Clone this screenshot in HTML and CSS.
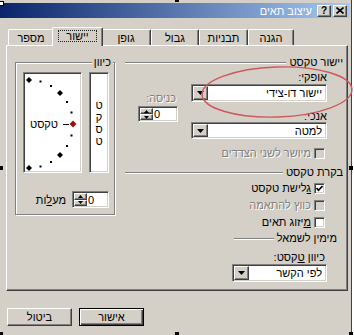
FILE: index.html
```html
<!DOCTYPE html>
<html lang="he">
<head>
    <meta charset="UTF-8">
    <title>עיצוב תאים</title>
    <link rel="stylesheet" href="styles.css">
</head>
<body>
<div class="screen">
    <div class="window">
        <!-- Title bar -->
        <div class="titlebar">
            <span class="title" dir="rtl">עיצוב תאים</span>
            <span class="cap-btn raised">?</span>
            <span class="cap-btn raised">
                <svg width="8" height="7" viewBox="0 0 8 7"><path d="M0.5 0.5 L7.5 6.5 M7.5 0.5 L0.5 6.5" stroke="#000" stroke-width="1.6"/></svg>
            </span>
        </div>

        <!-- Tabs -->
        <div class="tabs">
            <div class="tab">מספר</div>
            <div class="tab active"><span class="focus">יישור</span></div>
            <div class="tab">גופן</div>
            <div class="tab">גבול</div>
            <div class="tab">תבניות</div>
            <div class="tab">הגנה</div>
        </div>

        <div class="panel">
            <!-- Orientation group -->
            <div class="orient">
                <div class="group-title"><span>כיוון</span></div>
                <div class="orient-body">
                    <div class="diagram sunken">
                        <svg width="55" height="97" viewBox="0 0 55 97">
                            <polygon points="4,2 7,5 4,8 1,5" fill="#000"/>
                            <rect x="14.5" y="5.5" width="2" height="2" fill="#000"/>
                            <rect x="25" y="10" width="2" height="2" fill="#000"/>
                            <polygon points="35,15 38,18 35,21 32,18" fill="#000"/>
                            <rect x="41" y="26" width="2" height="2" fill="#000"/>
                            <rect x="45.5" y="36.5" width="2" height="2" fill="#000"/>
                            <polygon points="48,45.5 51.5,49 48,52.5 44.5,49" fill="#a01010"/>
                            <rect x="45.5" y="59.5" width="2" height="2" fill="#000"/>
                            <rect x="41" y="70" width="2" height="2" fill="#000"/>
                            <polygon points="35,77 38,80 35,83 32,80" fill="#000"/>
                            <rect x="25" y="86" width="2" height="2" fill="#000"/>
                            <rect x="14.5" y="90.5" width="2" height="2" fill="#000"/>
                            <polygon points="4,90 7,93 4,96 1,93" fill="#000"/>
                            <line x1="38" y1="49.5" x2="44" y2="49.5" stroke="#000" stroke-width="1"/>
                            <text x="19" y="53" text-anchor="middle" class="diag-text">טקסט</text>
                        </svg>
                    </div>
                    <div class="vtext sunken">
                        <span>ט</span><span>ק</span><span>ס</span><span>ט</span>
                    </div>
                </div>
                <div class="degrees">
                    <span dir="rtl">מע<u>ל</u>ות</span>
                    <div class="spin sunken">
                        <div class="spin-btns">
                            <span class="spin-btn raised"><svg width="5" height="3"><polygon points="2.5,0 5,3 0,3" fill="#000"/></svg></span>
                            <span class="spin-btn raised"><svg width="5" height="3"><polygon points="0,0 5,0 2.5,3" fill="#000"/></svg></span>
                        </div>
                        <span class="spin-val">0</span>
                    </div>
                </div>
            </div>

            <!-- Text alignment / control / direction -->
            <div class="align-area" dir="rtl">
                <div class="heading">יישור טקסט</div>
                <div class="h-grid">
                    <div class="field-label">אופקי:</div>
                    <div></div>
                    <div class="combo sunken">
                        <span class="combo-text">יישור דו-צידי</span>
                        <span class="drop raised"><svg width="7" height="4"><polygon points="0,0 7,0 3.5,4" fill="#000"/></svg></span>
                    </div>
                    <div class="indent-label">כניסה:</div>
                    <div class="field-label low">אנכי:</div>
                    <div class="spin sunken indent-spin" dir="ltr">
                        <div class="spin-btns">
                            <span class="spin-btn raised"><svg width="5" height="3"><polygon points="2.5,0 5,3 0,3" fill="#000"/></svg></span>
                            <span class="spin-btn raised"><svg width="5" height="3"><polygon points="0,0 5,0 2.5,3" fill="#000"/></svg></span>
                        </div>
                        <span class="spin-val">0</span>
                    </div>
                    <div class="combo sunken short">
                        <span class="combo-text">למטה</span>
                        <span class="drop raised"><svg width="7" height="4"><polygon points="0,0 7,0 3.5,4" fill="#000"/></svg></span>
                    </div>
                </div>

                <div class="check disabled first"><span class="box"></span><span class="check-text">מיושר לשני הצדדים</span></div>

                <div class="heading second">בקרת טקסט</div>
                <div class="check wrap"><span class="box"><svg width="7" height="7" viewBox="0 0 7 7"><polyline points="0.5,3 2.5,5.3 6.5,1" fill="none" stroke="#000" stroke-width="1.7"/></svg></span><span class="check-text"><u>ג</u>לישת טקסט</span></div>
                <div class="check disabled"><span class="box"></span><span class="check-text">כווץ להתאמה</span></div>
                <div class="check"><span class="box"></span><span class="check-text"><u>מ</u>יזוג תאים</span></div>

                <div class="heading third">מימין לשמאל</div>
                <div class="field-label dir-label">כיוון <u>ט</u>קסט:</div>
                <div class="combo sunken narrow">
                    <span class="combo-text">לפי הקשר</span>
                    <span class="drop raised"><svg width="7" height="4"><polygon points="0,0 7,0 3.5,4" fill="#000"/></svg></span>
                </div>
            </div>
        </div>

        <div class="buttons">
            <div class="btn raised">ביטול</div>
            <div class="btn default">אישור</div>
        </div>
    </div>

    <!-- red hand-drawn highlight -->
    <svg class="highlight" width="354" height="335">
        <ellipse cx="277" cy="92" rx="75" ry="25" fill="none" stroke="#d0575a" stroke-width="1.4" transform="rotate(-2 277 92)"/>
    </svg>

    <!-- selection handles -->
    <span class="handle h-tl"></span>
    <span class="handle h-tm"></span>
    <span class="handle h-ml"></span>
    <span class="handle h-mr"></span>
    <span class="handle h-bl"></span>
    <span class="handle h-bm"></span>
    <span class="handle h-br"></span>
</div>
</body>
</html>
```

FILE: styles.css
```css
body {
    margin: 0;
    font-family: "Liberation Sans", "DejaVu Sans", sans-serif;
    font-size: 11px;
    color: #000;
    background-color: #fff;
}

.screen {
    position: relative;
    width: 354px;
    height: 335px;
    overflow: hidden;
}

.window {
    width: 352px;
    height: 335px;
    box-sizing: border-box;
    padding-top: 3px;
    background-color: #d4d0c8;
    border-right: 1px solid #404040;
}

/* classic 3D edges */
.raised {
    box-sizing: border-box;
    background-color: #d4d0c8;
    border: 1px solid;
    border-color: #fff #404040 #404040 #fff;
    box-shadow: inset -1px -1px #808080;
}

.sunken {
    box-sizing: border-box;
    background-color: #fff;
    border: 1px solid;
    border-color: #808080 #fff #fff #808080;
    box-shadow: inset 1px 1px #404040, inset -1px -1px #d4d0c8;
}

/* title bar */
.titlebar {
    height: 15px;
    margin-right: 1px;
    padding-right: 3px;
    display: flex;
    align-items: center;
    justify-content: flex-end;
    gap: 2px;
    background: linear-gradient(to right, #0a246a, #a6caf0);
}

.title {
    color: #fff;
    margin-right: 3px;
}

.cap-btn {
    width: 14px;
    height: 12px;
    display: flex;
    align-items: center;
    justify-content: center;
    font-weight: bold;
    font-size: 10px;
}

/* tabs */
.tabs {
    display: flex;
    align-items: flex-end;
    height: 19px;
    margin-top: 9px;
    margin-bottom: -1px;
    padding-left: 8px;
}

.tab {
    height: 16px;
    margin-bottom: 1px;
    box-sizing: border-box;
    border-top: 1px solid #fff;
    border-left: 1px solid #fff;
    border-right: 1px solid #404040;
    box-shadow: inset -1px 0 #808080;
    border-radius: 2px 2px 0 0;
    display: flex;
    align-items: center;
    justify-content: center;
    background-color: #d4d0c8;
}

.tab:nth-child(1) { width: 46px; }
.tab:nth-child(2) { width: 51px; }
.tab:nth-child(3) { width: 50px; }
.tab:nth-child(4) { width: 48px; }
.tab:nth-child(5) { width: 49px; }
.tab:nth-child(6) { width: 46px; }

.tab.active {
    height: 19px;
    margin: 0 -2px;
    position: relative;
    z-index: 1;
    align-items: flex-start;
    padding-top: 2px;
}

.focus {
    border: 1px dotted #222;
    padding: 0 7px;
    line-height: 10px;
}

/* main tab page */
.panel {
    margin-left: 6px;
    width: 342px;
    height: 246px;
    box-sizing: border-box;
    border: 1px solid;
    border-color: #fff #404040 #404040 #fff;
    box-shadow: inset -1px -1px #808080;
    padding-top: 10px;
    display: flex;
    align-items: flex-start;
}

/* orientation group */
.orient {
    margin-left: 8px;
    margin-top: 6px;
    width: 100px;
    height: 153px;
    box-sizing: border-box;
    border: 1px solid #808080;
    box-shadow: inset 1px 1px #fff, 1px 1px #fff;
}

.group-title {
    display: flex;
    justify-content: flex-end;
    margin-top: -7px;
    padding-right: 1px;
    line-height: 12px;
}

.group-title span {
    background-color: #d4d0c8;
    padding: 0 2px;
}

.orient-body {
    display: flex;
    gap: 7px;
    padding: 4px 5px 0 7px;
}

.diagram {
    width: 59px;
    height: 101px;
    padding: 2px 0 0 1px;
}

.diagram svg {
    display: block;
}

.diag-text {
    font-family: "Liberation Sans", "DejaVu Sans", sans-serif;
    font-size: 11px;
}

.vtext {
    width: 20px;
    height: 101px;
    display: flex;
    flex-direction: column;
    align-items: center;
    justify-content: center;
    line-height: 12px;
}

.degrees {
    display: flex;
    justify-content: flex-end;
    align-items: center;
    gap: 6px;
    margin-top: 18px;
    padding-right: 5px;
}

/* spin boxes */
.spin {
    width: 37px;
    height: 17px;
    padding: 1px;
    display: flex;
    align-items: center;
}

.spin-btns {
    width: 13px;
    height: 100%;
    display: flex;
    flex-direction: column;
}

.spin-btn {
    flex: 1;
    display: flex;
    align-items: center;
    justify-content: center;
}

.spin-btn svg {
    display: block;
}

.spin-val {
    padding-left: 1px;
    line-height: 12px;
}

/* right side */
.align-area {
    width: 218px;
    margin-left: 10px;
    display: flex;
    flex-direction: column;
}

.heading {
    display: flex;
    align-items: center;
    gap: 3px;
    height: 13px;
    line-height: 13px;
}

.heading::after {
    content: '';
    flex: 1;
    height: 0;
    border-top: 1px solid #808080;
    border-bottom: 1px solid #fff;
}

.heading.second {
    margin-top: 7px;
}

.heading.third {
    margin-top: 4px;
    margin-right: 6px;
    margin-left: 109px;
}

.h-grid {
    display: grid;
    grid-template-columns: 136px 1fr;
    grid-template-rows: 13px 18px 20px 17px;
    column-gap: 4px;
    margin-top: 2px;
    margin-right: 16px;
}

.field-label {
    line-height: 13px;
}

.field-label.low {
    align-self: end;
    line-height: 12px;
}

.indent-label {
    align-self: end;
    justify-self: start;
    margin-right: 11px;
    margin-bottom: -2px;
    line-height: 12px;
    color: #808080;
    text-shadow: 1px 1px #fff;
}

.indent-spin {
    align-self: end;
    justify-self: start;
    width: 40px;
    height: 16px;
    margin-right: 9px;
}

.dir-label {
    margin-top: 6px;
    margin-right: 18px;
}

/* combo boxes */
.combo {
    height: 18px;
    padding: 1px;
    display: flex;
    align-items: stretch;
}

.combo.short {
    height: 17px;
}

.combo.narrow {
    width: 95px;
    margin-right: 16px;
}

.combo-text {
    flex: 1;
    padding-right: 3px;
    display: flex;
    align-items: center;
}

.drop {
    width: 15px;
    display: flex;
    align-items: center;
    justify-content: center;
}

.drop svg {
    display: block;
}

/* check boxes */
.check {
    display: flex;
    align-items: center;
    gap: 3px;
    height: 12px;
    margin-right: 18px;
    margin-top: 5px;
}

.check.first {
    margin-top: 8px;
}

.check.wrap {
    margin-top: 3px;
}

.box {
    width: 11px;
    height: 11px;
    box-sizing: border-box;
    background-color: #fff;
    border: 1px solid;
    border-color: #808080 #fff #fff #808080;
    box-shadow: inset 1px 1px #404040, inset -1px -1px #d4d0c8;
    display: flex;
    align-items: center;
    justify-content: center;
}

.box svg {
    display: block;
}

.check.disabled .box {
    background-color: #d4d0c8;
}

.check.disabled .check-text {
    color: #808080;
    text-shadow: 1px 1px #fff;
}

/* bottom buttons */
.buttons {
    display: flex;
    gap: 7px;
    margin: 17px 0 0 7px;
}

.btn {
    width: 65px;
    height: 18px;
    display: flex;
    align-items: center;
    justify-content: center;
}

.btn.default {
    box-sizing: border-box;
    background-color: #d4d0c8;
    border: 1px solid #000;
    box-shadow: inset 1px 1px #fff, inset -1px -1px #404040, inset -2px -2px #808080;
}

/* overlays */
.highlight {
    position: absolute;
    left: 0;
    top: 0;
    pointer-events: none;
}

.handle {
    position: absolute;
    width: 4px;
    height: 4px;
    background-color: #000;
}

.h-tl { left: -1px; top: 1px; width: 3px; height: 3px; background-color: #fff; border: 1px solid #000; }
.h-tm { left: 175px; top: -2px; }
.h-ml { left: -1px; top: 166px; }
.h-mr { left: 349px; top: 166px; }
.h-bl { left: -1px; top: 332px; }
.h-bm { left: 175px; top: 332px; }
.h-br { left: 349px; top: 332px; }
```
